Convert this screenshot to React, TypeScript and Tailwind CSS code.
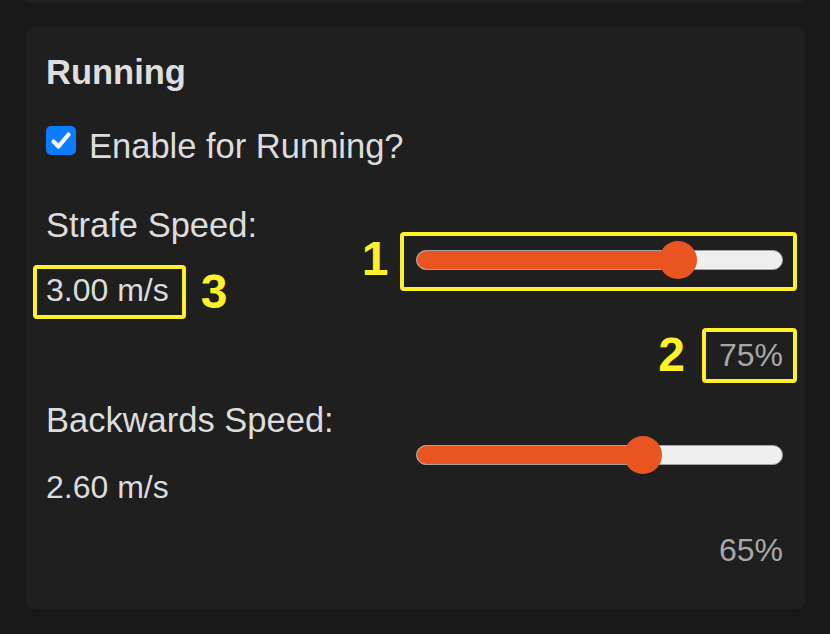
import React from "react";

const YELLOW = "border-[#fff02a]";

function Slider({ value, note }: { value: number; note?: boolean }) {
  return (
    <div className="relative mt-[36px] mr-[2px] h-[38px] flex items-center">
      <div className="relative w-full h-[20px] rounded-full bg-[#efefef] border border-[#a3a3a3] overflow-hidden">
        <div
          className="h-full bg-[#e95420]"
          style={{ width: `calc(${value} * (100% - 17px))` }}
        />
      </div>
      <div
        className="absolute top-0 w-[38px] h-[38px] rounded-full bg-[#e95420]"
        style={{ left: `calc(${value} * (100% - 17px) - 19px)` }}
      />
      {note && (
        <>
          <div className={`absolute -left-[16px] -right-[14px] -top-[9px] -bottom-[12px] border-4 ${YELLOW} rounded-[4px]`} />
          <span className="absolute right-full mr-[27px] -top-[6px] text-[48px] leading-none font-bold text-[#fff02a]">1</span>
        </>
      )}
    </div>
  );
}

function SettingRow({
  label,
  value,
  pct,
  first,
}: {
  label: string;
  value: string;
  pct: number;
  first?: boolean;
}) {
  return (
    <div className={`grid grid-cols-2 ${first ? "mt-[39px]" : "mt-[26px]"}`}>
      <div className="flex flex-col items-start">
        <div className="text-[34.5px] leading-[40px] text-[#dcdcdc]">{label}</div>
        <div className={`relative ${first ? "mt-[27px]" : "mt-[29px]"} text-[32px] leading-[37px] text-[#dcdcdc]`}>
          {value}
          {first && (
            <>
              <div className={`absolute -left-[13px] -right-[17px] -top-[7px] -bottom-[10px] border-4 ${YELLOW} rounded-[4px]`} />
              <span className="absolute left-full ml-[32px] -top-[4px] text-[48px] leading-none font-bold text-[#fff02a]">3</span>
            </>
          )}
        </div>
      </div>
      <div className="flex flex-col">
        <Slider value={pct / 100} note={first} />
        <div className="mt-[58px] flex justify-end pr-[2px]">
          <div className="relative text-[32px] leading-[37px] text-[#a8a8a8]">
            {pct}%
            {first && (
              <>
                <div className={`absolute -left-[17px] -right-[14px] -top-[9px] -bottom-[9px] border-4 ${YELLOW} rounded-[4px]`} />
                <span className="absolute right-full mr-[34px] -top-[6px] text-[48px] leading-none font-bold text-[#fff02a]">2</span>
              </>
            )}
          </div>
        </div>
      </div>
    </div>
  );
}

export default function App() {
  return (
    <div className="min-h-screen bg-[#181818] px-[26px] font-['Liberation_Sans',Arial,sans-serif]">
      <div className="h-[3px] rounded-b-lg bg-[#1f1f1f]" />
      <div className="mt-[24px] w-[779px] rounded-lg bg-[#1f1f1f] px-5 pt-[25px] pb-[40px]">
        <h2 className="text-[34.5px] leading-[40px] font-bold text-[#dedede]">Running</h2>
        <label className="mt-[34px] flex items-start gap-[13px]">
          <span className="mt-0 flex h-[29px] w-[30px] items-center justify-center rounded-[5px] bg-[#0b7bff]">
            <svg viewBox="0 0 24 24" className="h-[24px] w-[24px]" fill="none" stroke="white" strokeWidth="4.2" strokeLinecap="round" strokeLinejoin="round">
              <path d="M4.5 12.5l5 5L19.5 5.5" />
            </svg>
          </span>
          <span className="text-[34.5px] leading-[40px] text-[#dcdcdc]">Enable for Running?</span>
        </label>
        <SettingRow label="Strafe Speed:" value="3.00 m/s" pct={75} first />
        <SettingRow label="Backwards Speed:" value="2.60 m/s" pct={65} />
      </div>
    </div>
  );
}
